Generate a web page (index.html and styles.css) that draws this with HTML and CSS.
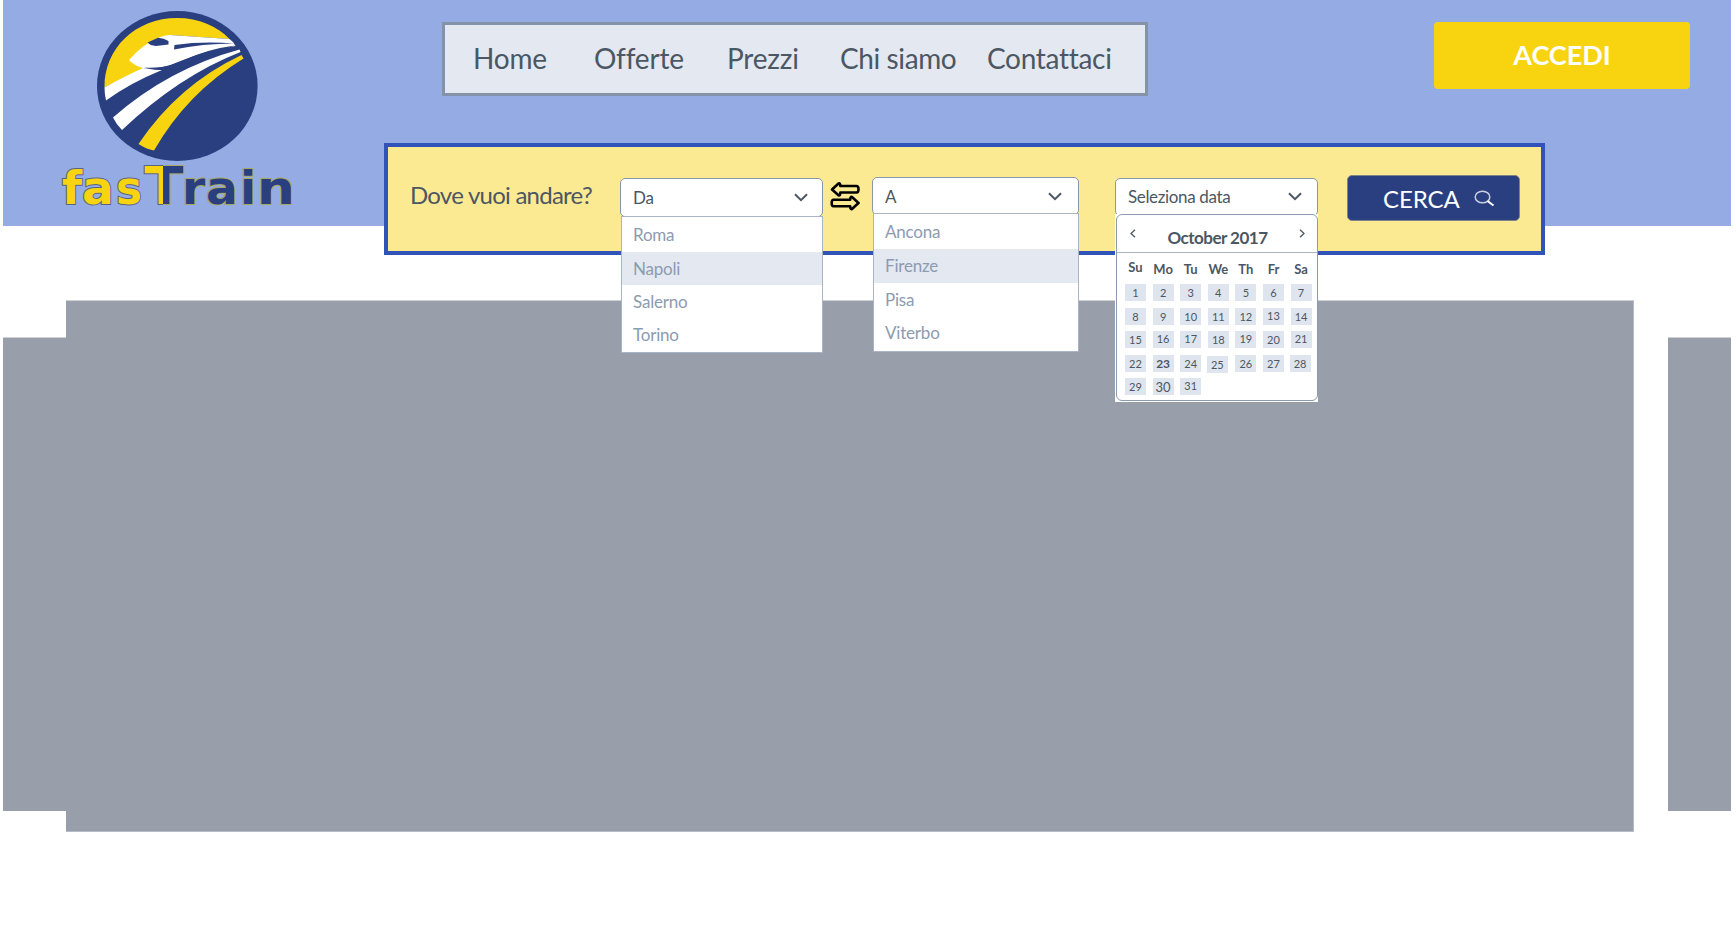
FILE: index.html
```html
<!DOCTYPE html>
<html lang="it">
<head>
<meta charset="utf-8">
<title>fasTrain</title>
<link rel="stylesheet" href="styles.css">
</head>
<body>
<div class="page">
  <header class="header">
    <svg class="logo" viewBox="50 0 260 226" role="img" aria-label="fasTrain">
      <defs>
        <linearGradient id="split" gradientUnits="userSpaceOnUse" x1="144" x2="184" y1="0" y2="0">
          <stop offset=".48" stop-color="#f8d410"/><stop offset=".48" stop-color="#293f80"/>
        </linearGradient>
        <linearGradient id="edge" gradientUnits="userSpaceOnUse" x1="144" x2="184" y1="0" y2="0">
          <stop offset=".48" stop-color="#596482"/><stop offset=".48" stop-color="#a9a860"/>
        </linearGradient>
      </defs>
      <ellipse cx="177.3" cy="86" rx="80.3" ry="75" fill="#293f80"/>
      <path fill="#f8d410" d="M104.5 87.500C104 48 136 18 177 18C199 18 217 26 229.500 39L170 35L131 60L144 68Z"/>
      <path fill="#fff" d="M104.500 87.500Q125 76 143 68L162 70Q130 83 106 100.500Q104.500 94 104.500 87.500Z"/>
      <path fill="#fff" d="M129 60Q143 44 158 38Q164 35 170 35L229.500 39L233 42L235.500 46Q205 51 178 62Q160 70 143 68Q133 65 129 60Z"/>
      <path fill="#293f80" d="M144 67.500Q168 69 184 60Q208 49 235 45.500Q202 57 173 69Q160 71 150 69Z"/>
      <path fill="#293f80" d="M147.500 42.500L158 37.800Q164 38 168.500 41L168.500 44.500L156 46Q150 45.500 147.500 42.500ZM174.500 45Q203 41 234 43.500Q202 43.500 174 49.500Z"/>
      <path fill="#fff" d="M113 117.500Q168 69 239.500 49.500L240.500 52Q179 76 122 130Q116 124 113 117.500Z"/>
      <path fill="#f8d410" d="M138.500 144Q178 85 241.500 55L243.500 58.500Q187 93 154 150.500Q146 149 138.500 144Z"/>
      <g class="logo-text">
        <text class="logo-fas"><tspan x="62" y="204" textLength="20" lengthAdjust="spacingAndGlyphs">f</tspan><tspan x="82" y="204">a</tspan><tspan x="116" y="204" textLength="26" lengthAdjust="spacingAndGlyphs">s</tspan></text>
        <text class="logo-t" x="144.500" y="204" textLength="39" lengthAdjust="spacingAndGlyphs">T</text>
        <text class="logo-rain"><tspan x="182" y="204">r</tspan><tspan x="206" y="204">a</tspan><tspan x="240" y="204">i</tspan><tspan x="257" y="204" textLength="38" lengthAdjust="spacingAndGlyphs">n</tspan></text>
      </g>
    </svg>
    <nav class="nav">
      <a class="nav-link home">Home</a><a class="nav-link offerte">Offerte</a><a class="nav-link prezzi">Prezzi</a><a class="nav-link chi">Chi siamo</a><a class="nav-link contatti">Contattaci</a>
    </nav>
    <button class="login">ACCEDI</button>
  </header>

  <section class="search">
    <span class="question">Dove vuoi andare?</span>
    <div class="select from">
      <div class="field">Da<svg class="chev" viewBox="0 0 14 9"><path d="M1 1.200L7 7.200L13 1.200"/></svg></div>
      <ul class="menu"><li>Roma</li><li class="active">Napoli</li><li>Salerno</li><li>Torino</li></ul>
    </div>
    <svg class="swap" viewBox="0 0 30 30"><path d="M2 8.500L8.500 2.500Q10.300 2 10.300 5H26.500Q28.500 5 28.500 8.300Q28.500 11.500 26.500 11.500H10.300Q10.300 15 8.500 14.200ZM28.500 22L22 16Q20.200 15.500 20.200 18.700H3.500Q1.700 18.700 1.700 22Q1.700 25.200 3.500 25.200H20.200Q20.200 28.700 22 28Z"/></svg>
    <div class="select to">
      <div class="field">A<svg class="chev" viewBox="0 0 14 9"><path d="M1 1.200L7 7.200L13 1.200"/></svg></div>
      <ul class="menu"><li>Ancona</li><li class="active">Firenze</li><li>Pisa</li><li>Viterbo</li></ul>
    </div>
    <div class="select date">
      <div class="field">Seleziona data<svg class="chev" viewBox="0 0 14 9"><path d="M1 1.200L7 7.200L13 1.200"/></svg></div>
      <div class="calendar">
        <div class="cal-card">
          <div class="month">
            <svg class="arrow" viewBox="0 0 6 9"><path d="M5 .7L1 4.500L5 8.300"/></svg>
            <span>October 2017</span>
            <svg class="arrow" viewBox="0 0 6 9"><path d="M1 .7L5 4.500L1 8.300"/></svg>
          </div>
          <div class="week"><span class="su">Su</span><span>Mo</span><span>Tu</span><span>We</span><span>Th</span><span>Fr</span><span>Sa</span></div>
          <div class="days">
            <span>1</span><span>2</span><span>3</span><span>4</span><span>5</span><span>6</span><span>7</span>
            <span>8</span><span>9</span><span>10</span><span>11</span><span>12</span><span class="high">13</span><span>14</span>
            <span>15</span><span class="high">16</span><span class="high">17</span><span>18</span><span class="high">19</span><span>20</span><span class="high">21</span>
            <span>22</span><span class="today">23</span><span>24</span><span class="low">25</span><span>26</span><span>27</span><span class="left">28</span>
            <span>29</span><span class="large">30</span><span class="up">31</span>
          </div>
        </div>
      </div>
    </div>
    <button class="go">CERCA<svg class="lens" viewBox="0 0 21 17"><ellipse cx="8.500" cy="7" rx="7.300" ry="5.800"/><path class="handle" d="M13.500 11L19.500 15.500"/></svg></button>
  </section>

  <main class="carousel">
    <div class="slide side"></div>
    <div class="slide main"></div>
    <div class="slide side next"></div>
  </main>
</div>
</body>
</html>
```
FILE: styles.css
```css
* { box-sizing: border-box; }
body { margin: 0; background: #fff; color: #4b5763; font-family: Lato, sans-serif; font-variant-ligatures: none; height: 945px; overflow: hidden; }
button { border: 0; padding: 0; font-family: inherit; color: #fff; }
.page { width: 1728px; margin-left: 3px; }

.header { height: 226px; background: #95abe3; display: flex; align-items: flex-start; }
.logo { width: 260px; height: 226px; margin-left: 47px; flex: none; }
.logo-text { font-family: "DejaVu Sans", sans-serif; font-weight: bold; font-size: 47px; paint-order: stroke; stroke-width: 2px; }
.logo-fas { fill: #f8d410; stroke: #596482; }
.logo-rain { fill: #293f80; stroke: #a9a860; }
.logo-t { font-size: 52px; fill: url(#split); stroke: url(#edge); }

.nav { width: 706px; height: 74px; margin: 22px 0 0 132px; padding: 0 0 2px 28px; border: 3px solid #8593a8; background: #e4e8f1; display: flex; align-items: center; flex: none; }
.nav-link { font-size: 28px; letter-spacing: -.2px; white-space: nowrap; }
.home { width: 121px; }
.offerte { width: 133px; }
.prezzi { width: 113px; }
.chi { width: 147px; letter-spacing: -.4px; }
.contatti { letter-spacing: -.3px; }
.login { width: 256px; height: 67px; margin: 22px 0 0 286px; padding-bottom: 2px; border-radius: 4px; background: #f8d410; font-size: 27px; font-weight: 700; flex: none; }

.search { width: 1161px; height: 112px; margin: -83px 0 0 381px; border: 4px solid #2f53b9; background: #fcea93; display: flex; align-items: flex-start; position: relative; z-index: 1; }
.question { width: 210px; margin: 33px 0 0 22px; font-size: 24px; letter-spacing: -.75px; line-height: 30px; white-space: nowrap; flex: none; }
.select { position: relative; flex: none; }
.field { height: 100%; border: 1px solid #8797aa; border-radius: 5px; background: #fff; padding: 0 14px 0 12px; font-size: 17px; letter-spacing: -.1px; display: flex; align-items: center; justify-content: space-between; }
.from { width: 203px; height: 39px; margin: 31px 0 0 0; }
.to { width: 207px; height: 38px; margin: 30px 0 0 12px; }
.to .field { padding-right: 16px; }
.date { width: 203px; height: 38px; margin: 31px 0 0 36px; }
.date .field { padding-right: 15px; padding-bottom: 1px; letter-spacing: -.35px; }
.chev { width: 14px; height: 9px; fill: none; stroke: #4b5763; stroke-width: 2; }
.menu { position: absolute; top: 100%; left: 1px; right: 0; margin: 0; padding: 0 0 1px; list-style: none; border: 1px solid #a9b5c5; background: #fff; color: #8c9bb0; font-size: 17px; letter-spacing: -.2px; }
.menu li { height: 33.500px; line-height: 33px; padding-left: 11px; }
.menu li:first-child { height: 35px; line-height: 36px; }
.menu .active { background: #e4e8f1; }
.from .menu { top: 38px; }
.from .menu li:not(:first-child) { height: 33px; }
.to .menu { top: 36px; }
.swap { width: 30px; height: 30px; margin: 34px 0 0 7px; fill: none; stroke: #000; stroke-width: 2.600; stroke-linejoin: round; flex: none; }

.calendar { position: absolute; top: 36px; left: 0; width: 203px; height: 188px; background: #fff; }
.cal-card { width: 202px; height: 187px; margin-left: 1px; border: 1px solid #8c9bb0; border-radius: 6px; }
.month { height: 38px; padding: 0 12px 0 13px; border-bottom: 1px solid #a9b5c5; display: flex; align-items: center; justify-content: space-between; font-size: 17px; letter-spacing: -.5px; font-weight: 700; }
.month span { padding-top: 7px; }
.arrow { width: 6px; height: 9px; fill: none; stroke: #4b5763; stroke-width: 1.300; }
.week, .days { display: grid; grid-template-columns: repeat(7, 21px); column-gap: 6.600px; padding-left: 8px; }
.week { height: 31px; padding-top: 8px; font-size: 13px; line-height: 16px; font-weight: 700; }
.week span { display: flex; justify-content: center; }
.week .su { margin-top: -2px; }
.days { grid-auto-rows: 17px; row-gap: 6.500px; font-size: 11px; line-height: 18px; text-align: center; }
.days span { background: #dfe5ee; }
.days .high { line-height: 16px; }
.days .today { font-weight: 700; font-size: 12px; }
.days .low { position: relative; top: 1px; left: -1px; }
.days .left { position: relative; left: -1px; }
.days .large { font-size: 13px; }
.days .up { line-height: 15px; }

.go { width: 173px; height: 46px; margin: 28px 0 0 29px; padding-left: 35px; border: 1px solid #7e8386; border-radius: 5px; background: #293f80; font-size: 24px; letter-spacing: -.1px; display: flex; align-items: center; flex: none; }
.lens { width: 21px; height: 17px; margin-left: 14px; fill: none; stroke: #c9d0e2; stroke-width: 1.500; }
.handle { stroke: #fff; stroke-width: 2; }

.carousel { display: flex; align-items: center; margin-top: 45px; height: 532px; }
.slide { background: #989faa; border-top: 1px solid #cfd2d4; }
.side { width: 63px; height: 474px; margin-top: 16px; }
.main { width: 1568px; height: 532px; border-right: 1px solid #b5bcc5; border-bottom: 1px solid #b5bcc5; }
.next { margin-left: 34px; }
```
